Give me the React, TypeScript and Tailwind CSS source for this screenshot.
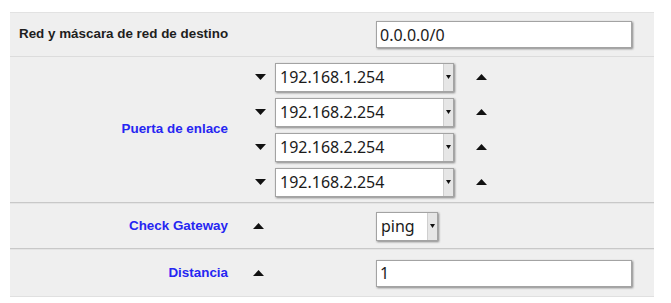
import React from 'react';

const Down = () => (
  <svg width="11" height="6" viewBox="0 0 11 6" className="shrink-0">
    <path d="M0 0 H11 L5.5 6 Z" fill="#111" />
  </svg>
);

const Up = () => (
  <svg width="11" height="6" viewBox="0 0 11 6" className="shrink-0">
    <path d="M0 6 H11 L5.5 0 Z" fill="#111" />
  </svg>
);

function Select({ value, width }: { value: string; width: string }) {
  return (
    <div
      className={`flex h-[29px] ${width} bg-white border border-[#a3a3a3] shadow-[1px_1px_2px_rgba(0,0,0,0.45)]`}
    >
      <span className="flex-1 flex items-center pl-[4px] text-[16px] font-normal text-[#1b1b1b] font-['Noto_Sans',sans-serif]">
        {value}
      </span>
      <span className="w-[10px] flex items-center justify-center bg-[#e6e6e6] border-l border-[#cfcfcf]">
        <svg width="5" height="4" viewBox="0 0 5 4">
          <path d="M0 0 H5 L2.5 4 Z" fill="#111" />
        </svg>
      </span>
    </div>
  );
}

function TextInput({ value }: { value: string }) {
  return (
    <div className="flex items-center h-[27px] w-[256px] bg-white border border-[#a3a3a3] shadow-[1px_1px_2px_rgba(0,0,0,0.45)] pl-[3px] text-[16px] font-normal text-[#1b1b1b] font-['Noto_Sans',sans-serif]">
      {value}
    </div>
  );
}

const gateways = ['192.168.1.254', '192.168.2.254', '192.168.2.254', '192.168.2.254'];

export default function App() {
  return (
    <div className="w-[671px] h-[303px] bg-white pt-[12px] pl-[10px] font-['Liberation_Sans',Arial,sans-serif] text-[13.4px] font-bold">
      <div className="w-[644px] bg-[#efefef] border-t border-[#e2e2e2]">
        {/* Red y máscara */}
        <div className="h-[44px] flex items-center border-b border-[#dcdcdc]">
          <span className="w-[366px] pl-[9px] text-[#1e1e1e]">Red y máscara de red de destino</span>
          <TextInput value="0.0.0.0/0" />
        </div>

        {/* Puerta de enlace */}
        <div className="h-[146px] flex items-center border-b border-[#c8c8c8]">
          <span className="w-[218px] text-right text-[#2626f2]">Puerta de enlace</span>
          <div className="flex flex-col gap-[6px] ml-[27px]">
            {gateways.map((g, i) => (
              <div key={i} className="flex items-center">
                <Down />
                <div className="ml-[9px]">
                  <Select value={g} width="w-[179px]" />
                </div>
                <div className="ml-[22px]">
                  <Up />
                </div>
              </div>
            ))}
          </div>
        </div>

        {/* Check Gateway */}
        <div className="h-[46px] flex items-center border-t border-[#e4e4e4] border-b border-b-[#c8c8c8]">
          <span className="w-[218px] text-right text-[#2626f2]">Check Gateway</span>
          <div className="ml-[25px]">
            <Up />
          </div>
          <div className="ml-[112px]">
            <Select value="ping" width="w-[62px]" />
          </div>
        </div>

        {/* Distancia */}
        <div className="h-[48px] flex items-center border-t border-[#e4e4e4] border-b border-b-[#e0e0e0]">
          <span className="w-[218px] text-right text-[#2626f2]">Distancia</span>
          <div className="ml-[25px]">
            <Up />
          </div>
          <div className="ml-[112px]">
            <TextInput value="1" />
          </div>
        </div>
      </div>
    </div>
  );
}
